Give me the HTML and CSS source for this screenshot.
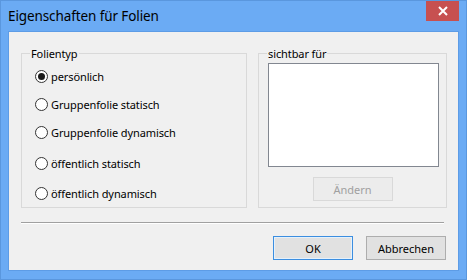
FILE: index.html
```html
<!DOCTYPE html>
<html lang="de">
<head>
	<meta charset="UTF-8" />
	<title>Eigenschaften für Folien</title>
	<link rel="stylesheet" href="styles.css">
</head>
<body>
	<!-- Dialog Window -->
	<div class="window">
		<!-- Title Bar -->
		<div class="titlebar">
			<span class="title">Eigenschaften für Folien</span>
			<button class="close" aria-label="Schließen">
				<svg width="10" height="10" viewBox="0 0 10 10">
					<path d="M1 1 L9 9 M9 1 L1 9" stroke="#fff" stroke-width="2" />
				</svg>
			</button>
		</div>
		<!-- End of Title Bar -->

		<div class="client">
			<div class="groups">
				<!-- Folientyp -->
				<section class="group type-group">
					<span class="group-label">Folientyp</span>
					<label class="radio radio-1">
						<input type="radio" name="typ" checked />
						<span class="dot"></span>
						<span>persönlich</span>
					</label>
					<label class="radio radio-2">
						<input type="radio" name="typ" />
						<span class="dot"></span>
						<span>Gruppenfolie statisch</span>
					</label>
					<label class="radio radio-3">
						<input type="radio" name="typ" />
						<span class="dot"></span>
						<span>Gruppenfolie dynamisch</span>
					</label>
					<label class="radio radio-4">
						<input type="radio" name="typ" />
						<span class="dot"></span>
						<span>öffentlich statisch</span>
					</label>
					<label class="radio radio-5">
						<input type="radio" name="typ" />
						<span class="dot"></span>
						<span>öffentlich dynamisch</span>
					</label>
				</section>

				<!-- sichtbar für -->
				<section class="group visible-group">
					<span class="group-label">sichtbar für</span>
					<div class="listbox"></div>
					<button class="btn change" disabled>Ändern</button>
				</section>
			</div>

			<hr class="separator" />

			<div class="actions">
				<button class="btn ok">OK</button>
				<button class="btn">Abbrechen</button>
			</div>
		</div>
	</div>
	<!-- End of Dialog Window -->
</body>
</html>
```

FILE: styles.css
```css
/* Variables */
:root {
	--frame: #6babf4;
	--frame-edge: #5a97de;
	--face: #f0f0f0;
	--group-line: #d9d9d9;
	--text: #000;
	--disabled: #a0a0a0;
}

* {
	margin: 0;
	padding: 0;
	box-sizing: border-box;
	font-family: "Segoe UI", "Noto Sans", sans-serif;
}

body {
	background: #fff;
}

.window {
	width: 467px;
	height: 280px;
	background: var(--frame);
	border: 1px solid var(--frame-edge);
	display: flex;
	flex-direction: column;
	padding: 0 7px 8px 7px;
}

/* Title Bar */
.titlebar {
	height: 30px;
	display: flex;
	align-items: flex-start;
	justify-content: space-between;
}

.titlebar .title {
	margin-top: 6px;
	font-size: 13.5px;
	color: #000;
	letter-spacing: -0.1px;
}

.titlebar .close {
	width: 33px;
	height: 20px;
	border: none;
	background: #c75050;
	display: flex;
	align-items: center;
	justify-content: center;
}

/* Client Area */
.client {
	flex: 1;
	background: var(--face);
	border: 1px solid #5d9ce6;
	padding: 21px 11px 0 12px;
	font-size: 11px;
	letter-spacing: -0.1px;
	color: var(--text);
}

.groups {
	display: flex;
	gap: 11px;
}

.group {
	position: relative;
	border: 1px solid var(--group-line);
	height: 155px;
}

.group-label {
	position: absolute;
	top: -8px;
	left: 8px;
	padding: 0 1px;
	background: var(--face);
	line-height: 15px;
}

.type-group {
	width: 228px;
	padding: 14px 0 0 13px;
	display: flex;
	flex-direction: column;
}

.radio {
	display: flex;
	align-items: center;
	height: 17px;
	gap: 3px;
}

.radio-2, .radio-3 {
	margin-top: 11px;
}

.radio-4 {
	margin-top: 14px;
}

.radio-5 {
	margin-top: 13px;
}

.radio input {
	display: none;
}

.radio .dot {
	width: 13px;
	height: 13px;
	border: 1px solid #333;
	border-radius: 50%;
	background: #fff;
	display: flex;
	align-items: center;
	justify-content: center;
}

.radio input:checked ~ .dot::after {
	content: '';
	width: 7px;
	height: 7px;
	border-radius: 50%;
	background: #1a1a1a;
}

.visible-group {
	width: 189px;
	padding: 9px 7px 0 9px;
	display: flex;
	flex-direction: column;
	align-items: center;
}

.listbox {
	width: 171px;
	height: 104px;
	background: #fff;
	border: 1px solid #828790;
}

/* Buttons */
.btn {
	width: 80px;
	height: 24px;
	font-size: 11px;
	background: #e1e1e1;
	border: 1px solid #adadad;
	color: var(--text);
}

.btn.change {
	margin-top: 10px;
	margin-right: 2px;
	background: #ececec;
	border-color: #d9d9d9;
	color: var(--disabled);
}

.btn.ok {
	border-color: #3c8ee0;
	box-shadow: inset 0 0 0 1px #e5f1fb;
}

.separator {
	border: none;
	border-top: 1px solid #a0a0a0;
	border-bottom: 1px solid #fff;
	margin: 14px 3px 0 0;
}

.actions {
	display: flex;
	justify-content: flex-end;
	gap: 13px;
	margin-top: 12px;
	padding-right: 1px;
}
```
